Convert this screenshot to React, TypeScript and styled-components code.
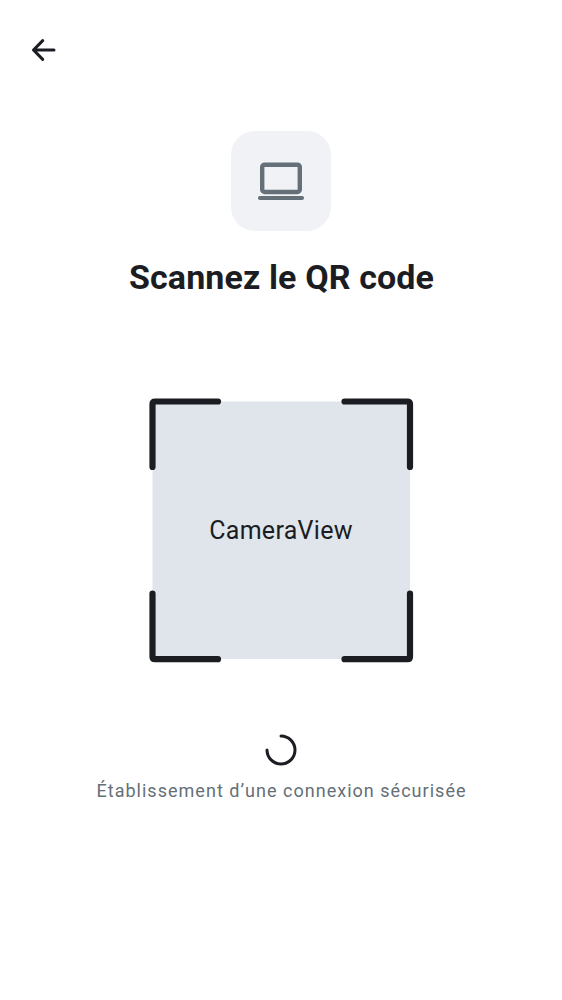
import React from 'react';
import styled, { createGlobalStyle } from 'styled-components';

const GlobalStyle = createGlobalStyle`
  * { box-sizing: border-box; }
  body { margin: 0; background: #fff; font-family: Roboto, "Liberation Sans", sans-serif; }
`;

const Screen = styled.main`
  display: flex;
  flex-direction: column;
  height: 1000px;
  color: #1b1d22;
`;

const TopBar = styled.header`
  display: flex;
  align-items: center;
  height: 100px;
  padding: 0 26px;
`;

const BackButton = styled.button`
  display: flex;
  border: 0;
  padding: 0;
  background: none;
  color: inherit;
`;

const Content = styled.section`
  display: flex;
  flex-direction: column;
  align-items: center;
  padding-top: 31px;
`;

const DeviceTile = styled.div`
  display: grid;
  place-items: center;
  width: 100px;
  height: 100px;
  border-radius: 24px;
  background: #f0f2f6;
  color: #656f78;
`;

const Title = styled.h1`
  margin: 24px 0 0;
  padding-left: 1px;
  font-size: 34px;
  line-height: 44px;
  font-weight: 700;
  letter-spacing: 0.12px;
  white-space: nowrap;
`;

const Scanner = styled.div`
  position: relative;
  display: grid;
  place-items: center;
  width: 258px;
  height: 258px;
  margin-top: 102px;
`;

const Frame = styled.svg`
  position: absolute;
  inset: -4px;
`;

const ScannerLabel = styled.span`
  position: relative;
  padding-top: 1px;
  font-size: 25px;
  line-height: 36px;
  letter-spacing: 0.3px;
`;

const Status = styled.div`
  display: flex;
  flex-direction: column;
  align-items: center;
  gap: 10px;
  margin-top: 74px;
`;

const StatusText = styled.p`
  margin: 0;
  padding-left: 1px;
  color: #656f78;
  font-size: 18px;
  line-height: 28px;
  letter-spacing: 1.02px;
  white-space: nowrap;
`;

export default function App() {
  return (
    <Screen>
      <GlobalStyle />
      <TopBar>
        <BackButton aria-label="Retour">
          <svg width="34" height="34" viewBox="0 0 34 34" fill="none" stroke="currentColor" strokeWidth="3" strokeLinecap="round" strokeLinejoin="round">
            <path d="M28 17H7.5M16.7 7.6L7.5 17L16.7 26.4" />
          </svg>
        </BackButton>
      </TopBar>
      <Content>
        <DeviceTile>
          <svg width="46" height="38" viewBox="0 0 46 38" fill="none" stroke="currentColor" strokeWidth="4" strokeLinecap="round">
            <rect x="4.2" y="2.7" width="37.6" height="27.3" rx="2.4" strokeWidth="4.4" />
            <path d="M2 36H44" />
          </svg>
        </DeviceTile>
        <Title>Scannez le QR code</Title>
        <Scanner>
          <Frame width="266" height="266" viewBox="-4 -4 266 266" fill="none" stroke="#1b1d22" strokeWidth="6.2" strokeLinecap="round" strokeLinejoin="round">
            <rect x=".5" y=".5" width="257.5" height="257.5" fill="#e0e5ec" stroke="none" />
            <path d="M.5 66V3Q.5 .5 3 .5H66" />
            <path d="M192.5 .5H255.5Q258 .5 258 3V66" />
            <path d="M.5 192.5V255.7Q.5 258.2 3 258.2H66" />
            <path d="M192.5 258.2H255.5Q258 258.2 258 255.7V192.5" />
          </Frame>
          <ScannerLabel>CameraView</ScannerLabel>
        </Scanner>
        <Status>
          <svg width="34" height="34" viewBox="0 0 34 34" fill="none" stroke="#1b1d22" strokeWidth="3" strokeLinecap="round">
            <path d="M17 3A14 14 0 1 1 3 17" />
          </svg>
          <StatusText>Établissement d’une connexion sécurisée</StatusText>
        </Status>
      </Content>
    </Screen>
  );
}
